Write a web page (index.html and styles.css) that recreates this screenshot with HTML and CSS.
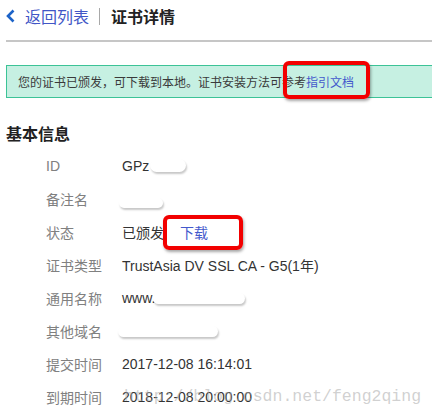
FILE: index.html
```html
<!DOCTYPE html>
<html lang="zh-CN">
<head>
    <meta charset="UTF-8">
    <title>证书详情</title>
    <link rel="stylesheet" href="styles.css">
</head>
<body>
    <div class="header">
        <a class="back" href="#">
            <svg class="chevron" width="9" height="14" viewBox="0 0 9 14">
                <path d="M7.5 1.5 L2 7 L7.5 12.5" fill="none" stroke="#1c63c8" stroke-width="2.6"/>
            </svg>
            返回列表
        </a>
        <span class="divider"></span>
        <span class="title">证书详情</span>
    </div>

    <div class="alert">
        您的证书已颁发，可下载到本地。证书安装方法可参考<a class="link mark-doc" href="#">指引文档</a>
    </div>

    <h2 class="section-title">基本信息</h2>

    <div class="info">
        <div class="label">ID</div>
        <div class="value">GPz<span class="blob blob-id"></span></div>

        <div class="label">备注名</div>
        <div class="value"><span class="blob blob-note"></span></div>

        <div class="label">状态</div>
        <div class="value">已颁发<a class="link mark-dl" href="#">下载</a></div>

        <div class="label">证书类型</div>
        <div class="value">TrustAsia DV SSL CA - G5(1年)</div>

        <div class="label">通用名称</div>
        <div class="value">www.<span class="blob blob-cn"></span></div>

        <div class="label">其他域名</div>
        <div class="value"><span class="blob blob-alt"></span></div>

        <div class="label">提交时间</div>
        <div class="value">2017-12-08 16:14:01</div>

        <div class="label">到期时间</div>
        <div class="value">2018-12-08 20:00:00</div>
    </div>

    <div class="watermark">http://blog.csdn.net/feng2qing</div>
</body>
</html>
```

FILE: styles.css
```css
body {
    margin: 0;
    padding: 0 0 0 6px;
    font-family: "Liberation Sans", "Noto Sans CJK SC", sans-serif;
    background-color: #ffffff;
    color: #333333;
    position: relative;
    height: 416px;
    overflow: hidden;
}

a {
    text-decoration: none;
}

.header {
    display: flex;
    align-items: center;
    height: 40px;
    border-bottom: 2px solid #c6c6c6;
    font-family: "Noto Sans CJK SC", sans-serif;
    font-size: 16px;
}

.back {
    display: flex;
    align-items: center;
    color: #4156c6;
    margin-top: -8px;
}

.chevron {
    margin-right: 10px;
}

.divider {
    width: 1px;
    height: 17px;
    background-color: #a8a8a8;
    margin: -8px 11px 0 10px;
}

.title {
    font-weight: bold;
    color: #222222;
    margin-top: -8px;
}

.alert {
    margin-top: 23px;
    height: 31px;
    line-height: 31px;
    border: 1px solid #3cc397;
    border-right: none;
    background-color: #c6f0e2;
    padding-left: 11px;
    font-family: "Noto Sans CJK SC", sans-serif;
    font-size: 12px;
    color: #3a3a3a;
}

.link {
    color: #4358cc;
    position: relative;
}

/* red annotation boxes drawn over the screenshot */
.mark-doc::after,
.mark-dl::after {
    content: "";
    position: absolute;
    border: 4px solid #f20000;
    border-radius: 6px;
    box-shadow: 1px 2px 3px rgba(0, 0, 0, 0.35);
}

.mark-doc::after {
    left: -23px;
    right: -16px;
    top: -12px;
    bottom: -9px;
}

.mark-dl {
    margin-left: 16px;
}

.mark-dl::after {
    left: -17px;
    right: -35px;
    top: -7px;
    bottom: -8px;
}

.section-title {
    margin: 24px 0 5px;
    font-family: "Noto Sans CJK SC", sans-serif;
    font-size: 16px;
    line-height: 22px;
    font-weight: bold;
    color: #222222;
}

.info {
    display: grid;
    grid-template-columns: 76px 1fr;
    grid-auto-rows: 33px;
    padding-left: 40px;
    font-size: 14px;
}

.label,
.value {
    display: flex;
    align-items: center;
}

.label {
    color: #808080;
}

.value {
    color: #333333;
}

.blob {
    display: inline-block;
    background-color: #ffffff;
    border-radius: 8px;
    box-shadow: 1px 2px 2px rgba(0, 0, 0, 0.22);
}

.blob-id {
    width: 36px;
    height: 13px;
    margin-left: 1px;
}

.blob-note {
    width: 44px;
    height: 10px;
    margin: 8px 0 0 -3px;
}

.blob-cn {
    width: 92px;
    height: 11px;
    margin: 2px 0 0 -2px;
}

.blob-alt {
    width: 100px;
    height: 11px;
    margin: 2px 0 0 -4px;
}

.watermark {
    position: absolute;
    left: 124px;
    top: 387px;
    font-family: "Liberation Mono", monospace;
    font-size: 16.5px;
    color: rgba(170, 170, 170, 0.55);
    pointer-events: none;
}
```
